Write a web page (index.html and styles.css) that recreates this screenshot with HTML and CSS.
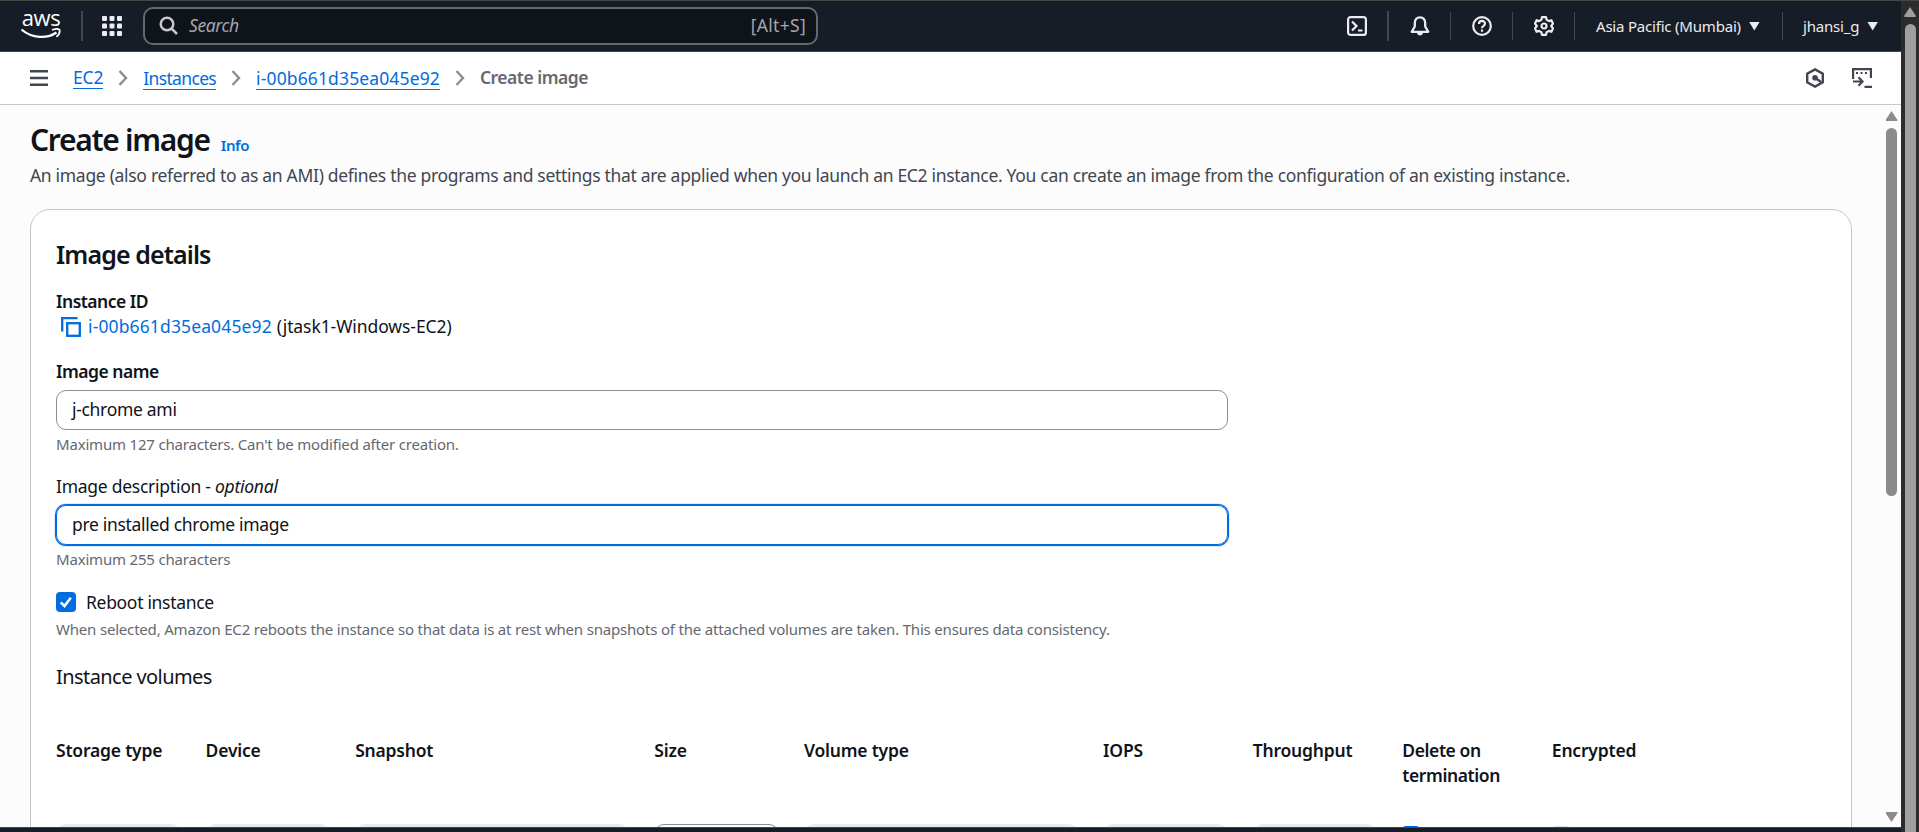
FILE: index.html
```html
<!DOCTYPE html>
<html lang="en">
<head>
<meta charset="utf-8">
<title>Create image | EC2</title>
<link rel="stylesheet" href="styles.css">
</head>
<body>
<div class="window">
  <div class="app">
    <header class="topbar">
      <div class="logo">
        <span class="logo-text">aws</span>
        <svg class="logo-smile" viewBox="0 0 40 13" width="40" height="13"><path d="M0.500 1.500C11 10.500 26 11 35.500 4.500" fill="none" stroke="#fff" stroke-width="2.200"/><path d="M31 2C34 0.800 37.500 0.800 38.500 1.800C39 3.800 38 6.800 35.500 8.800" fill="none" stroke="#fff" stroke-width="1.800"/></svg>
      </div>
      <span class="vline vline-tall"></span>
      <svg class="apps" viewBox="0 0 20 20" width="20" height="20" fill="#ebebf0"><rect width="5" height="5" rx="1"/><rect x="7.500" width="5" height="5" rx="1"/><rect x="15" width="5" height="5" rx="1"/><rect y="7.500" width="5" height="5" rx="1"/><rect x="7.500" y="7.500" width="5" height="5" rx="1"/><rect x="15" y="7.500" width="5" height="5" rx="1"/><rect y="15" width="5" height="5" rx="1"/><rect x="7.500" y="15" width="5" height="5" rx="1"/><rect x="15" y="15" width="5" height="5" rx="1"/></svg>
      <div class="search">
        <svg viewBox="0 0 20 20" width="20" height="20" fill="none" stroke="#c6c6cd" stroke-width="2.500"><circle cx="8" cy="8" r="6.300"/><path d="M12.500 12.500L18 18"/></svg>
        <span class="search-hint">Search</span>
        <span class="search-key">[Alt+S]</span>
      </div>
      <nav class="tools">
        <span class="tool tool-shell"><svg viewBox="0 0 20 20" width="20" height="20" fill="none" stroke="#ebebf0" stroke-width="2.200"><rect x="1.100" y="1.100" width="17.800" height="17.800" rx="2.500"/><path d="M5 5.500L9.500 10L5 14.500M11 14.500H15.500"/></svg></span>
        <span class="tool"><svg viewBox="0 0 20 20" width="20" height="20" fill="none" stroke="#ebebf0" stroke-width="2.300" stroke-linejoin="round"><path d="M10 1.300C6.500 1.300 4.800 4 4.800 7V10.500L1.700 15.800H18.300L15.200 10.500V7C15.200 4 13.500 1.300 10 1.300Z"/><path d="M6.800 16.500C7.500 20.500 12.500 20.500 13.200 16.500Z" fill="#ebebf0" stroke="none"/></svg></span>
        <span class="tool"><svg viewBox="0 0 20 20" width="20" height="20" fill="none" stroke="#ebebf0" stroke-width="2.200"><circle cx="10" cy="10" r="8.800"/><path d="M7 8C7 3.900 13 4 13 7.700C13 10 10 9.800 10 12.300M10 13.500V15.700"/></svg></span>
        <span class="tool"><svg viewBox="0 0 20 20" width="20" height="20" fill="none" stroke="#ebebf0" stroke-width="2.200" stroke-linejoin="round"><path d="M8 1.200H12L12.600 3.800L15 5.100L17.400 4.200L19 7.600L17.200 10L19 12.400L17.400 15.800L15 14.900L12.600 16.200L12 18.800H8L7.400 16.200L5 14.900L2.600 15.800L1 12.400L2.800 10L1 7.600L2.600 4.200L5 5.100L7.400 3.800Z"/><circle cx="10" cy="10" r="2.500"/></svg></span>
        <span class="account region"><span class="t-region">Asia Pacific (Mumbai)</span><i class="caret"></i></span>
        <span class="account user"><span class="t-user">jhansi_g</span><i class="caret"></i></span>
      </nav>
    </header>

    <div class="crumbbar">
      <svg class="menu" viewBox="0 0 18 16" width="18" height="16" stroke="#424650" stroke-width="2.400"><path d="M0 1.200H18M0 8H18M0 14.800H18"/></svg>
      <nav class="crumbs">
        <a class="t-ec2">EC2</a><svg class="chev" viewBox="0 0 10 16" width="10" height="16"><path d="M1.500 1L8 8L1.500 15"/></svg>
        <a class="t-instances">Instances</a><svg class="chev" viewBox="0 0 10 16" width="10" height="16"><path d="M1.500 1L8 8L1.500 15"/></svg>
        <a class="t-id">i-00b661d35ea045e92</a><svg class="chev" viewBox="0 0 10 16" width="10" height="16"><path d="M1.500 1L8 8L1.500 15"/></svg>
        <b class="t-current">Create image</b>
      </nav>
      <svg class="hex" viewBox="0 0 18 20" width="18" height="20" fill="none" stroke="#424650" stroke-width="2.400"><path d="M9 1.400L16.800 5.600V14.400L9 18.600L1.200 14.400V5.600Z"/><circle cx="9" cy="9.800" r="2.800" fill="#424650" stroke="none"/><path d="M9 9.800L15 14"/></svg>
      <svg class="shellicon" viewBox="0 0 20 20" width="20" height="20" fill="none" stroke="#424650" stroke-width="2.200"><path d="M1.100 11V1.100H18.900V10"/><path d="M4 5H6M8.500 5H10.500M13 5H15" stroke-width="2"/><path d="M1 13.500H10M6.500 9.300L10.500 13.500L6.500 17.700M12.500 18.800H20"/></svg>
    </div>

    <div class="viewport">
      <main class="page">
        <div class="title"><h1 class="t-h1">Create image</h1><a class="info">Info</a></div>
        <p class="lead"><span class="t-lead">An image (also referred to as an AMI) defines the programs and settings that are applied when you launch an EC2 instance. You can create an image from the configuration of an existing instance.</span></p>
        <section class="card">
          <h2>Image details</h2>
          <div class="label strong">Instance ID</div>
          <div class="idrow">
            <svg viewBox="0 0 20 20" width="20" height="20" fill="none" stroke="#006ce0" stroke-width="2.300"><path d="M1.200 14.500V1.200H16.500"/><rect x="6.200" y="6.200" width="12.600" height="12.600"/></svg>
            <a class="t-id">i-00b661d35ea045e92</a><span class="t-name">(jtask1-Windows-EC2)</span>
          </div>
          <div class="label strong name-label">Image name</div>
          <div class="input"><span>j-chrome ami</span></div>
          <div class="help">Maximum 127 characters. Can't be modified after creation.</div>
          <div class="label desc-label">Image description - <em>optional</em></div>
          <div class="input focus"><span>pre installed chrome image</span></div>
          <div class="help">Maximum 255 characters</div>
          <div class="checkrow">
            <span class="check"><svg viewBox="0 0 20 20" width="20" height="20"><path d="M4.700 10.300L8.500 14L14.800 5.800" fill="none" stroke="#fff" stroke-width="2.500"/></svg></span>
            <span>Reboot instance</span>
          </div>
          <div class="help reboot-help">When selected, Amazon EC2 reboots the instance so that data is at rest when snapshots of the attached volumes are taken. This ensures data consistency.</div>
          <h3>Instance volumes</h3>
          <div class="grid heads">
            <b>Storage type</b><b>Device</b><b class="wide">Snapshot</b><b>Size</b><b class="wide">Volume type</b><b>IOPS</b><b>Throughput</b><b class="tight">Delete on termination</b><b>Encrypted</b>
          </div>
          <div class="grid fields">
            <i class="off"></i><i class="off"></i><i class="off wide"></i><i class="on"></i><i class="off wide"></i><i class="off"></i><i class="off"></i><i class="box checked"></i><i class="box"></i>
          </div>
        </section>
      </main>
      <div class="scroll inner"><i class="up"></i><i class="thumb"></i><i class="down"></i></div>
    </div>
    <footer class="footer"></footer>
  </div>
  <div class="scroll outer"><i class="up"></i><i class="thumb"></i></div>
</div>
</body>
</html>
```
FILE: styles.css
```css
* { box-sizing: border-box; }
body { margin: 0; font-family: "Noto Sans", "Open Sans", sans-serif; font-size: 17.5px; line-height: 25px; color: #0f141a; letter-spacing: -0.31px; }
h1, h2, h3, p { margin: 0; }
svg { display: block; flex: none; }
a { color: #006ce0; }
.window { display: flex; width: 1919px; height: 832px; overflow: hidden; border-top: 1px solid #444746; }
.app { width: 1901px; display: flex; flex-direction: column; }
span, a, b, h1 { white-space: nowrap; }

.topbar { height: 51px; background: #161d26; border-bottom: 1px solid #424650; display: flex; align-items: center; color: #ebebf0; flex: none; }
.logo { width: 40px; margin-left: 21px; display: flex; flex-direction: column; align-items: center; }
.logo-text { font-family: "Open Sans", sans-serif; font-size: 22px; line-height: 20px; height: 15px; display: flex; align-items: center; color: #fff; font-weight: 500; letter-spacing: -0.5px; margin-top: 1px; padding-bottom: 5px; }
.logo-smile { margin-top: 1px; }
.vline { width: 1px; height: 28px; background: #424650; }
.vline-tall { width: 2px; height: 30px; margin-left: 20px; }
.apps { margin-left: 19px; }
.search { width: 675px; height: 38px; margin-left: 21px; border: 2px solid #656871; border-radius: 10px; background: #0f141a; display: flex; align-items: center; padding: 0 10px 1px 14px; color: #a4a4ad; }
.search-hint { font-style: italic; margin-left: 10px; flex: 1; letter-spacing: -0.4px; }
.search-key { letter-spacing: 0.3px; }
.tools { margin-left: auto; display: flex; align-items: center; font-size: 15px; }
.tool { width: 62px; height: 28px; border-right: 1px solid #424650; display: flex; align-items: center; justify-content: center; }
.tool-shell { border-right-width: 2px; height: 30px; }
.account { display: flex; align-items: center; height: 28px; }
.region { width: 208px; padding-left: 21px; border-right: 1px solid #424650; letter-spacing: -0.2px; }
.user { width: 118px; padding-left: 20px; letter-spacing: -0.2px; }
.caret { width: 11px; height: 9px; background: #ebebf0; clip-path: polygon(0 0, 100% 0, 50% 100%); margin-left: 8px; }

.crumbbar { height: 53px; background: #fff; border-bottom: 1px solid #c6c6cd; display: flex; align-items: center; padding: 0 29px 0 30px; flex: none; }
.crumbs { display: flex; align-items: center; margin-left: 25px; flex: 1; }
.crumbs a { border-bottom: 1px solid #006ce0; line-height: 22px; }
.crumbs .t-ec2 { letter-spacing: -0.2px; margin-bottom: 2px; }
.t-instances { letter-spacing: -0.65px; }
.t-id { letter-spacing: 0.13px; }
.chev { margin: 0 15px; fill: none; stroke: #8c8c94; stroke-width: 2.4; }
.t-current { color: #656871; font-weight: 600; letter-spacing: -0.5px; padding-bottom: 1px; }
.hex { margin-right: 28px; }

.viewport { flex: 1; min-height: 0; display: flex; overflow: hidden; background: #fcfcfd; }
.page { width: 1852px; padding: 16px 0 0 30px; flex: none; }
.title { display: flex; align-items: baseline; height: 42px; }
h1 { font-size: 30px; line-height: 38px; font-weight: 600; letter-spacing: -1.3px; }
.info { font-size: 15px; font-weight: 600; margin-left: 11px; letter-spacing: -0.4px; }
.lead { color: #424650; height: 46px; }
.card { width: 1822px; height: 700px; border: 1px solid #c6c6cd; border-radius: 20px; background: #fff; padding: 29px 25px 0; }
h2 { font-size: 25px; line-height: 30px; font-weight: 600; letter-spacing: -0.9px; }
.label { height: 25px; }
.strong { font-weight: 600; letter-spacing: -0.5px; }
h2 + .label { margin-top: 20px; }
.idrow { display: flex; align-items: center; height: 25px; padding-left: 5px; }
.idrow a { margin-left: 7px; }
.idrow .t-name { margin-left: 5px; letter-spacing: -0.08px; }
.name-label { margin-top: 20px; }
.input { width: 1172px; height: 40px; margin-top: 6px; border: 1px solid #8c8c94; border-radius: 10px; padding: 0 15px 1px; display: flex; align-items: center; }
.focus { border-color: #006ce0; box-shadow: 0 0 0 1px #006ce0, 0 0 0 1.5px #b8d8fb; }
.help { font-size: 15px; line-height: 20px; color: #656871; margin-top: 4px; letter-spacing: -0.19px; }
.desc-label { margin-top: 20px; letter-spacing: -0.26px; }
.checkrow { display: flex; align-items: center; height: 26px; margin-top: 20px; }
.check { width: 20px; height: 20px; border-radius: 4px; background: #006ce0; margin-right: 10px; }
h3 { font-size: 20px; line-height: 25px; font-weight: 400; margin-top: 25px; letter-spacing: -0.57px; }
.grid { display: grid; grid-template-columns: repeat(12, minmax(0, 1fr)); column-gap: 25px; }
.wide { grid-column: span 2; }
.heads { margin-top: 49px; height: 86px; letter-spacing: -0.2px; }
.heads b { white-space: normal; font-weight: 600; }
.heads .tight { letter-spacing: -0.4px; }
.fields i { height: 40px; border-radius: 10px; }
.off { background: #ebebf0; }
.on { border: 1px solid #8c8c94; }
.fields .box { width: 18px; height: 18px; border-radius: 4px; background: #dedee3; margin-top: 2px; }
.fields .checked { background: #006ce0; }

.scroll { display: flex; flex-direction: column; align-items: center; }
.inner { width: 19px; margin-left: 30px; padding-top: 6px; }
.scroll i { flex: none; }
.up { width: 12px; height: 10px; background: #8b8b8b; clip-path: polygon(50% 0, 100% 90%, 95% 100%, 5% 100%, 0 90%); }
.down { width: 12px; height: 10px; background: #8b8b8b; clip-path: polygon(0 0, 100% 0, 100% 10%, 50% 100%, 0 10%); margin-top: 316px; }
.thumb { width: 11px; height: 368px; border-radius: 6px; background: #8b8b8b; margin-top: 7px; }
.outer { width: 18px; background: #2c2c2c; padding-top: 6px; }
.outer i { background: #9f9f9f; }
.outer .thumb { height: 820px; margin-top: 7px; }
.footer { height: 5px; flex: none; background: #161d26; border-top: 1px solid #424650; }
```
